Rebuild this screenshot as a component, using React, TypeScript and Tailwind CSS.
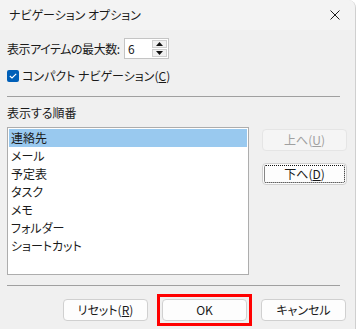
import React from "react";

const items = ["連絡先", "メール", "予定表", "タスク", "メモ", "フォルダー", "ショートカット"];

function Btn({
  children,
  disabled,
  focused,
  className = "",
}: {
  children: React.ReactNode;
  disabled?: boolean;
  focused?: boolean;
  className?: string;
}) {
  return (
    <div
      className={`relative flex h-[22px] w-[85px] items-center justify-center rounded-[4px] border text-[12px] ${
        disabled
          ? "border-[#e5e5e5] bg-[#f5f5f5] text-[#a0a0a0]"
          : "border-[#d0d0d0] bg-[#fdfdfd] text-[#1a1a1a]"
      } ${className}`}
    >
      {focused && (
        <div className="pointer-events-none absolute inset-[1px] rounded-[2px] border border-dotted border-[#111]" />
      )}
      {children}
    </div>
  );
}

export default function App() {
  return (
    <div
      className="flex h-[329px] w-[356px] flex-col overflow-hidden rounded-tr-[8px] border-r border-[#cfcfcf] bg-[#f0f0f0] text-[12px] text-[#1a1a1a] [font-feature-settings:'palt']"
      style={{ fontFamily: '"Noto Sans CJK JP", "Noto Sans", sans-serif' }}
    >
      {/* Title bar */}
      <div className="flex h-[30px] shrink-0 items-center justify-between bg-[#f3f3f3] pl-[9px] pr-[15px]">
        <span className="text-[12px]">ナビゲーション オプション</span>
        <svg width="10" height="10" viewBox="0 0 10 10" className="text-[#1a1a1a]">
          <path d="M0.5 0.5 L9.5 9.5 M9.5 0.5 L0.5 9.5" stroke="currentColor" strokeWidth="1" />
        </svg>
      </div>

      <div className="flex flex-1 flex-col px-[7px] pt-[8px]">
        {/* Max items */}
        <div className="flex h-[21px] items-center">
          <span className="w-[117px] shrink-0 whitespace-nowrap tracking-[-0.45px]">表示アイテムの最大数:</span>
          <div className="flex h-[21px] w-[45px] border border-[#c4c4c4] bg-white">
            <span className="flex flex-1 items-center pl-[3px]">6</span>
            <div className="flex w-[17px] flex-col gap-[1px] bg-white p-[1px]">
              <div className="flex flex-1 items-center justify-center border border-[#cfcfcf] bg-[#f0f0f0]">
                <svg width="7" height="4" viewBox="0 0 7 4">
                  <path d="M3.5 0 L7 4 L0 4 Z" fill="#111" />
                </svg>
              </div>
              <div className="flex flex-1 items-center justify-center border border-[#cfcfcf] bg-[#f0f0f0]">
                <svg width="7" height="4" viewBox="0 0 7 4">
                  <path d="M0 0 L7 0 L3.5 4 Z" fill="#111" />
                </svg>
              </div>
            </div>
          </div>
        </div>

        {/* Compact navigation */}
        <div className="mt-[8px] flex h-[18px] items-center gap-[3px]">
          <div className="flex h-[12px] w-[12px] items-center justify-center rounded-[2px] bg-[#005fb8]">
            <svg width="8" height="6" viewBox="0 0 8 6">
              <path d="M0.8 3 L3 5 L7.2 0.8" stroke="white" strokeWidth="1.1" fill="none" />
            </svg>
          </div>
          <span>
            コンパクト ナビゲーション(<span className="underline">C</span>)
          </span>
        </div>

        <div className="mt-[11px] h-px w-[333px] bg-[#a0a0a0]" />

        <div className="mt-[8px] flex h-[16px] items-center">表示する順番</div>

        {/* List + buttons */}
        <div className="mt-[6px] flex">
          <div className="h-[148px] w-[242px] border border-[#adadad] bg-white p-[1px]">
            {items.map((it, i) => (
              <div
                key={it}
                className={`flex h-[18px] items-center pl-[2px] ${i === 0 ? "bg-[#99c9ef]" : ""}`}
              >
                {it}
              </div>
            ))}
          </div>
          <div className="ml-[13px] mt-[2px] flex flex-col gap-[12px]">
            <Btn disabled>
              上へ(<span className="underline">U</span>)
            </Btn>
            <Btn focused>
              下へ(<span className="underline">D</span>)
            </Btn>
          </div>
        </div>

        <div className="mt-[10px] h-px w-[333px] bg-[#a0a0a0]" />

        {/* Bottom buttons */}
        <div className="mt-[13px] flex gap-[14px] pl-[56px]">
          <Btn>
            リセット(<span className="underline">R</span>)
          </Btn>
          <div className="relative">
            <Btn>OK</Btn>
            <div className="pointer-events-none absolute -inset-[5px] border-[3px] border-[#ff0000]" />
          </div>
          <Btn>キャンセル</Btn>
        </div>
      </div>
    </div>
  );
}
